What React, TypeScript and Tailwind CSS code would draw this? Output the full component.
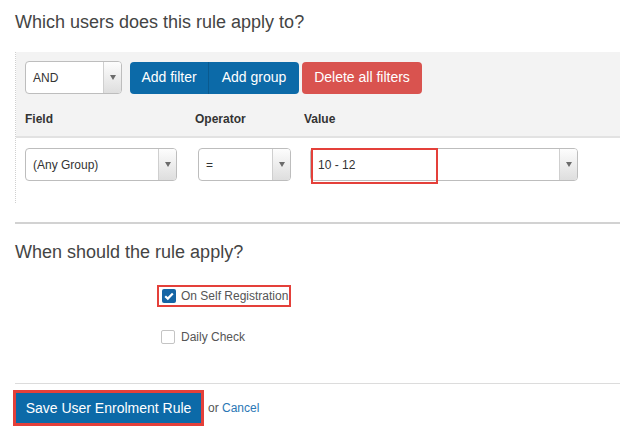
import type { ReactNode } from 'react'

function Caret() {
  return (
    <span className="h-0 w-0 border-x-[3.5px] border-t-[5px] border-x-transparent border-t-[#6b6b6b]" />
  )
}

function FakeSelect({
  value,
  className,
  children,
}: {
  value: string
  className: string
  children?: ReactNode
}) {
  return (
    <div
      className={`relative flex h-[33px] items-stretch rounded-[4px] border border-[#bdbdbd] bg-white ${className}`}
    >
      <span className="flex flex-1 items-center pl-[7px] text-[12px] text-[#333]">{value}</span>
      <span className="flex w-[18px] items-center justify-center rounded-r-[3px] border-l border-[#cfcfcf] bg-gradient-to-b from-[#fdfdfd] to-[#dedede]">
        <Caret />
      </span>
      {children}
    </div>
  )
}

function App() {
  return (
    <div className="h-[434px] w-[620px] overflow-hidden bg-white font-['Liberation_Sans',Arial,sans-serif] text-[#333]">
      <h2 className="ml-[15px] pt-[12px] text-[18px] leading-[20px] text-[#444]">
        Which users does this rule apply to?
      </h2>

      <div className="ml-[15px] mt-[20px] border-l border-dotted border-[#d0d0d0]">
        <div className="border-b-2 border-[#e2e2e2] bg-[#f3f3f3] pb-[9px] pl-[9px] pt-[9px]">
          <div className="flex items-center">
            <FakeSelect value="AND" className="h-[32px] w-[97px]" />
            <div className="ml-[8px] flex h-[32px] overflow-hidden rounded-[4px] bg-[#0c6aa8] text-[14px] text-white">
              <button type="button" className="w-[79px] border-r border-[#0a5a8f]">
                Add filter
              </button>
              <button type="button" className="w-[90px]">
                Add group
              </button>
            </div>
            <button
              type="button"
              className="ml-[3px] h-[32px] w-[120px] rounded-[4px] bg-[#d9534f] text-[14px] text-white"
            >
              Delete all filters
            </button>
          </div>
          <div className="mt-[17px] flex h-[16px] text-[12px] font-bold leading-[16px] text-[#333]">
            <span className="w-[170px]">Field</span>
            <span className="w-[109px]">Operator</span>
            <span>Value</span>
          </div>
        </div>

        <div className="flex h-[65px] pl-[9px] pt-[10px]">
          <FakeSelect value="(Any Group)" className="w-[152px]" />
          <FakeSelect value="=" className="ml-[21px] w-[93px]" />
          <FakeSelect value="10 - 12" className="ml-[19px] w-[268px]">
            <span className="absolute left-0 top-[-1px] h-[36px] w-[127px] border-2 border-[#e4403a]" />
          </FakeSelect>
        </div>
      </div>

      <div className="ml-[15px] mt-[19px] border-t-2 border-[#d2d2d2]" />

      <h2 className="ml-[15px] mt-[18px] text-[18px] leading-[20px] text-[#444]">
        When should the rule apply?
      </h2>

      <div className="ml-[157px] mt-[23px]">
        <label className="flex h-[22px] w-[134px] items-center border-2 border-[#e4403a] pl-[3px] text-[12px] text-[#555]">
          <span className="flex h-[14px] w-[14px] items-center justify-center rounded-[2px] bg-[#1565a5]">
            <svg viewBox="0 0 14 14" className="h-[14px] w-[14px]">
              <path d="M3.2 7.2 L5.8 9.6 L10.8 4.4" fill="none" stroke="white" strokeWidth="2.2" />
            </svg>
          </span>
          <span className="ml-[5px]">On Self Registration</span>
        </label>
        <label className="mt-[19px] flex h-[22px] items-center pl-[4px] text-[12px] text-[#555]">
          <span className="h-[14px] w-[14px] rounded-[2px] border border-[#c4c4c4] bg-white" />
          <span className="ml-[6px]">Daily Check</span>
        </label>
      </div>

      <div className="ml-[15px] mt-[35px] border-t border-[#dcdcdc]" />

      <div className="ml-[13px] mt-[6px] flex items-center">
        <button
          type="button"
          className="h-[36px] w-[191px] border-[3px] border-[#e4403a] bg-[#0c6aa8] text-[14px] text-white"
        >
          Save User Enrolment Rule
        </button>
        <span className="ml-[4px] text-[12px] text-[#555]">
          or <span className="text-[#2a77b5]">Cancel</span>
        </span>
      </div>
    </div>
  )
}

export default App
